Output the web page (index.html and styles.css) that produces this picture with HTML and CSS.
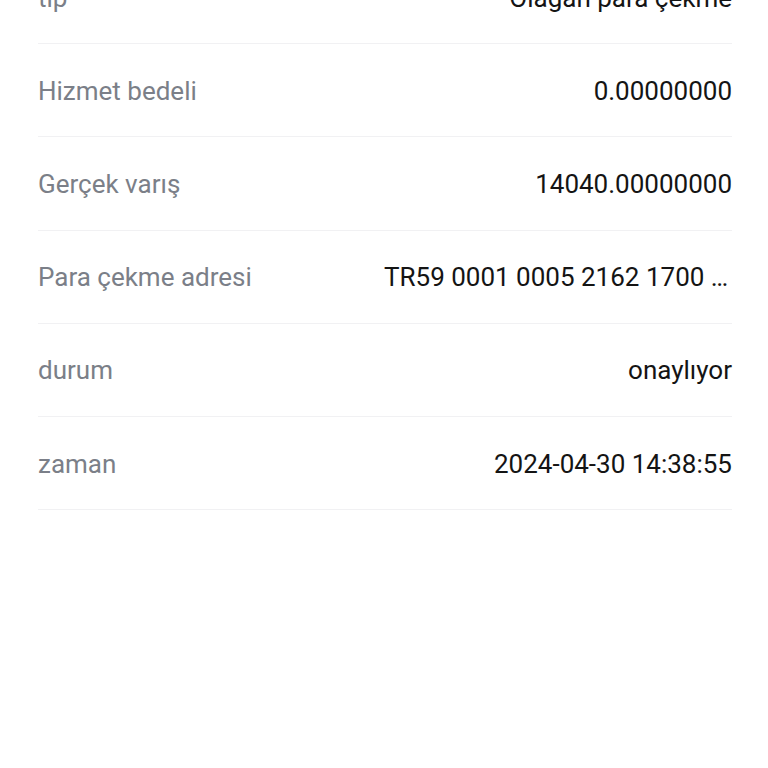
FILE: index.html
```html
<!DOCTYPE html>
<html lang="tr">
<head>
    <meta charset="UTF-8">
    <meta name="viewport" content="width=device-width, initial-scale=1.0">
    <title>Para çekme detayı</title>
    <link rel="stylesheet" href="styles.css">
</head>
<body>

<main class="detail-list">
    <div class="detail-row">
        <span class="label">tip</span>
        <span class="value">Olağan para çekme</span>
    </div>
    <div class="detail-row">
        <span class="label">Hizmet bedeli</span>
        <span class="value">0.00000000</span>
    </div>
    <div class="detail-row">
        <span class="label">Gerçek varış</span>
        <span class="value">14040.00000000</span>
    </div>
    <div class="detail-row">
        <span class="label">Para çekme adresi</span>
        <span class="value address">TR59 0001 0005 2162 1700 1002 34</span>
    </div>
    <div class="detail-row">
        <span class="label">durum</span>
        <span class="value">onaylıyor</span>
    </div>
    <div class="detail-row">
        <span class="label">zaman</span>
        <span class="value">2024-04-30 14:38:55</span>
    </div>
</main>

</body>
</html>
```

FILE: styles.css
```css
body {
    font-family: Roboto, "Liberation Sans", sans-serif;
    margin: 0;
    padding: 0;
    background-color: #ffffff;
    color: #111111;
    overflow: hidden;
}
.detail-list {
    margin: -49px 36px 0 38px; /* first row is scrolled partly out of view */
}
.detail-row {
    display: flex;
    align-items: center;
    justify-content: space-between;
    gap: 24px;
    height: 93.2px;
    box-sizing: border-box;
    border-bottom: 1px solid #f1f1f3;
    font-size: 26px;
    padding-top: 1px;
}
.label {
    color: #7b7f88;
    white-space: nowrap;
}
.value {
    color: #141414;
    white-space: nowrap;
    text-align: right;
}
.address {
    max-width: 348px;
    overflow: hidden;
    text-overflow: ellipsis;
}
```
